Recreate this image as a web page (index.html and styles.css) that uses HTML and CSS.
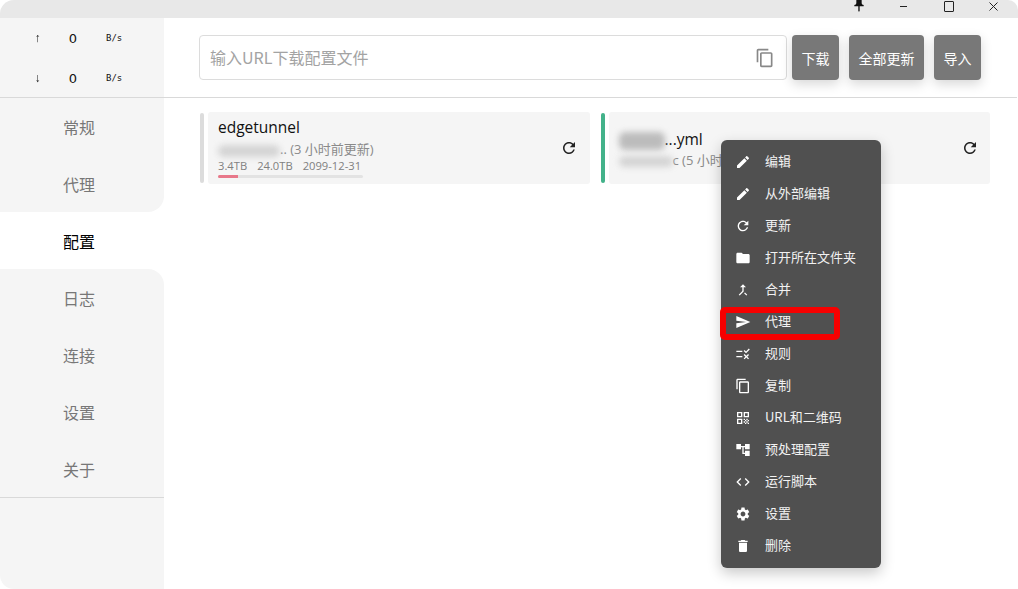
FILE: index.html
```html
<!DOCTYPE html>
<html lang="zh-CN">

<head>
	<meta charset="utf-8">
	<title>配置</title>
	<link rel="stylesheet" href="styles.css">
</head>

<body>
	<svg class="defs" width="0" height="0">
		<symbol id="i-edit" viewBox="0 0 24 24"><path d="M3 17.25V21h3.75L17.81 9.94l-3.75-3.75L3 17.25zM20.71 7.04c.39-.39.39-1.02 0-1.41l-2.34-2.34c-.39-.39-1.02-.39-1.41 0l-1.83 1.83 3.75 3.75 1.83-1.83z"/></symbol>
		<symbol id="i-refresh" viewBox="0 0 24 24"><path d="M17.65 6.35C16.2 4.9 14.21 4 12 4c-4.42 0-7.99 3.58-7.99 8s3.57 8 7.99 8c3.73 0 6.84-2.55 7.73-6h-2.08c-.82 2.33-3.04 4-5.65 4-3.31 0-6-2.69-6-6s2.69-6 6-6c1.66 0 3.14.69 4.22 1.78L13 11h7V4l-2.35 2.35z"/></symbol>
		<symbol id="i-folder" viewBox="0 0 24 24"><path d="M10 4H4c-1.1 0-1.99.9-1.99 2L2 18c0 1.1.9 2 2 2h16c1.1 0 2-.9 2-2V8c0-1.1-.9-2-2-2h-8l-2-2z"/></symbol>
		<symbol id="i-merge" viewBox="0 0 24 24"><path d="M17 20.41 18.41 19 15 15.59 13.59 17 17 20.41zM7.5 8H11v5.59L5.59 19 7 20.41l6-6V8h3.5L12 3.5 7.5 8z"/></symbol>
		<symbol id="i-send" viewBox="0 0 24 24"><path d="M2.01 21 23 12 2.01 3 2 10l15 2-15 2z"/></symbol>
		<symbol id="i-rule" viewBox="0 0 24 24"><path d="M16.54 11 13 7.46l1.41-1.41 2.12 2.12 4.24-4.24 1.41 1.41L16.54 11zM11 7H2v2h9V7zm10 6.41L19.59 12 17 14.59 14.41 12 13 13.41 15.59 16 13 18.59 14.41 20 17 17.41 19.59 20 21 18.59 18.41 16 21 13.41zM11 15H2v2h9v-2z"/></symbol>
		<symbol id="i-copy" viewBox="0 0 24 24"><path d="M16 1H4c-1.1 0-2 .9-2 2v14h2V3h12V1zm3 4H8c-1.1 0-2 .9-2 2v14c0 1.1.9 2 2 2h11c1.1 0 2-.9 2-2V7c0-1.1-.9-2-2-2zm0 16H8V7h11v14z"/></symbol>
		<symbol id="i-qr" viewBox="0 0 24 24"><path d="M3 11h8V3H3v8zm2-6h4v4H5V5zM3 21h8v-8H3v8zm2-6h4v4H5v-4zM13 3v8h8V3h-8zm6 6h-4V5h4v4zM19 19h2v2h-2zM13 13h2v2h-2zM15 15h2v2h-2zM13 17h2v2h-2zM15 19h2v2h-2zM17 17h2v2h-2zM17 13h2v2h-2zM19 15h2v2h-2z"/></symbol>
		<symbol id="i-tree" viewBox="0 0 24 24"><path d="M22 11V3h-7v3H9V3H2v8h7V8h2v10h4v3h7v-8h-7v3h-2V8h2v3z"/></symbol>
		<symbol id="i-code" viewBox="0 0 24 24"><path d="M9.4 16.6 4.8 12l4.6-4.6L8 6l-6 6 6 6 1.4-1.4zm5.2 0 4.6-4.6-4.6-4.6L16 6l6 6-6 6-1.4-1.4z"/></symbol>
		<symbol id="i-gear" viewBox="0 0 24 24"><path d="M19.14 12.94c.04-.3.06-.61.06-.94 0-.32-.02-.64-.07-.94l2.03-1.58c.18-.14.23-.41.12-.61l-1.92-3.32c-.12-.22-.37-.29-.59-.22l-2.39.96c-.5-.38-1.03-.7-1.62-.94l-.36-2.54c-.04-.24-.24-.41-.48-.41h-3.84c-.24 0-.43.17-.47.41l-.36 2.54c-.59.24-1.13.57-1.62.94l-2.39-.96c-.22-.08-.47 0-.59.22L2.74 8.87c-.12.21-.08.47.12.61l2.03 1.58c-.05.3-.09.63-.09.94s.02.64.07.94l-2.03 1.58c-.18.14-.23.41-.12.61l1.92 3.32c.12.22.37.29.59.22l2.39-.96c.5.38 1.03.7 1.62.94l.36 2.54c.05.24.24.41.48.41h3.84c.24 0 .44-.17.47-.41l.36-2.54c.59-.24 1.13-.56 1.62-.94l2.39.96c.22.08.47 0 .59-.22l1.92-3.32c.12-.22.07-.47-.12-.61l-2.01-1.58zM12 15.6c-1.98 0-3.6-1.62-3.6-3.6s1.62-3.6 3.6-3.6 3.6 1.62 3.6 3.6-1.62 3.6-3.6 3.6z"/></symbol>
		<symbol id="i-trash" viewBox="0 0 24 24"><path d="M6 19c0 1.1.9 2 2 2h8c1.1 0 2-.9 2-2V7H6v12zM19 4h-3.5l-1-1h-5l-1 1H5v2h14V4z"/></symbol>
		<symbol id="i-pin" viewBox="0 0 24 24"><path d="M16 9V4h1c.55 0 1-.45 1-1s-.45-1-1-1H7c-.55 0-1 .45-1 1s.45 1 1 1h1v5c0 1.66-1.34 3-3 3v2h5.97v7l1 1 1-1v-7H19v-2c-1.66 0-3-1.34-3-3z"/></symbol>
	</svg>

	<div id="app">
		<div class="titlebar">
			<span class="win-btn pin"><svg><use href="#i-pin"/></svg></span>
			<span class="win-btn"><i class="win-min"></i></span>
			<span class="win-btn"><i class="win-max"></i></span>
			<span class="win-btn"><svg class="win-close" viewBox="0 0 9 9"><path d="M.5.5l8 8M8.5.5l-8 8"/></svg></span>
		</div>

		<div class="body">
			<div class="sidebar">
				<div class="traffic">
					<div class="traffic-row"><span class="arrow">↑</span><span class="rate">0</span><span class="unit">B/s</span></div>
					<div class="traffic-row"><span class="arrow">↓</span><span class="rate">0</span><span class="unit">B/s</span></div>
				</div>
				<div class="nav">
					<div class="nav-item">常规</div>
					<div class="nav-item before-active">代理</div>
					<div class="nav-item active">配置</div>
					<div class="nav-item after-active">日志</div>
					<div class="nav-item">连接</div>
					<div class="nav-item">设置</div>
					<div class="nav-item">关于</div>
				</div>
				<div class="side-bottom"></div>
			</div>

			<div class="main">
				<div class="toolbar">
					<div class="url-box">
						<span class="url-hint">输入URL下载配置文件</span>
						<svg class="url-copy"><use href="#i-copy"/></svg>
					</div>
					<button class="btn btn-first">下载</button>
					<button class="btn">全部更新</button>
					<button class="btn">导入</button>
				</div>

				<div class="profiles">
					<div class="profile">
						<div class="strip"></div>
						<div class="card">
							<div class="card-text">
								<div class="card-name">edgetunnel</div>
								<div class="card-sub"><span class="smudge smudge-a"></span>.. (3 小时前更新)</div>
								<div class="card-stats"><span>3.4TB</span><span>24.0TB</span><span>2099-12-31</span></div>
								<div class="usage"><div class="usage-fill" style="width:14%"></div></div>
							</div>
							<svg class="card-refresh"><use href="#i-refresh"/></svg>
						</div>
					</div>
					<div class="profile">
						<div class="strip strip-on"></div>
						<div class="card">
							<div class="card-text card-text-b">
								<div class="card-name"><span class="smudge smudge-b"></span>...yml</div>
								<div class="card-sub"><span class="smudge smudge-c"></span>c (5 小时</div>
							</div>
							<svg class="card-refresh"><use href="#i-refresh"/></svg>
						</div>
					</div>
				</div>
			</div>
		</div>

		<div class="menu">
			<div class="menu-item"><svg><use href="#i-edit"/></svg>编辑</div>
			<div class="menu-item"><svg><use href="#i-edit"/></svg>从外部编辑</div>
			<div class="menu-item"><svg><use href="#i-refresh"/></svg>更新</div>
			<div class="menu-item"><svg><use href="#i-folder"/></svg>打开所在文件夹</div>
			<div class="menu-item"><svg><use href="#i-merge"/></svg>合并</div>
			<div class="menu-item"><svg><use href="#i-send"/></svg>代理</div>
			<div class="menu-item"><svg><use href="#i-rule"/></svg>规则</div>
			<div class="menu-item"><svg><use href="#i-copy"/></svg>复制</div>
			<div class="menu-item"><svg><use href="#i-qr"/></svg>URL和二维码</div>
			<div class="menu-item"><svg><use href="#i-tree"/></svg>预处理配置</div>
			<div class="menu-item"><svg><use href="#i-code"/></svg>运行脚本</div>
			<div class="menu-item"><svg><use href="#i-gear"/></svg>设置</div>
			<div class="menu-item"><svg><use href="#i-trash"/></svg>删除</div>
			<div class="mark"></div>
		</div>
	</div>
</body>

</html>
```

FILE: styles.css
```css
html,
body {
	margin: 0;
	height: 100%;
	background: #fff;
	overflow: hidden;
}

body {
	font-family: "Open Sans", "Noto Sans CJK SC", sans-serif;
	color: #1a1a1a;
}

.defs {
	display: block;
	position: absolute;
}

#app {
	position: relative;
	height: 589px;
}

/* title bar, cut off at the top */
.titlebar {
	height: 18px;
	background: #e8e8e8;
	border-radius: 14px 10px 0 0;
	display: flex;
	justify-content: flex-end;
	padding-right: 2px;
	overflow: hidden;
}

.win-btn {
	width: 45px;
	height: 18px;
	display: flex;
	justify-content: center;
	flex: none;
	color: #222;
}

.pin svg {
	width: 16px;
	height: 16px;
	margin-top: -3px;
	fill: #111;
}

.win-min {
	width: 7px;
	height: 1px;
	margin-top: 6px;
	background: #222;
}

.win-max {
	width: 8px;
	height: 9px;
	border: 1px solid #222;
	border-radius: 1px;
	margin-top: 1px;
}

.win-close {
	width: 9px;
	height: 9px;
	margin-top: 2px;
	fill: none;
	stroke: #222;
}

.body {
	display: flex;
	height: 571px;
}

/* sidebar */
.sidebar {
	width: 164px;
	flex: none;
	display: flex;
	flex-direction: column;
}

.traffic {
	height: 80px;
	background: #f5f5f5;
	border-bottom: 1px solid #d9d9d9;
	box-sizing: border-box;
}

.traffic-row {
	height: 40px;
	display: flex;
	align-items: center;
	font-family: "DejaVu Sans Mono", monospace;
	color: #111;
}

.arrow {
	width: 75px;
	font-family: "Liberation Sans", sans-serif;
	font-size: 12px;
	text-align: center;
	flex: none;
	will-change: transform;
}

.rate {
	width: 16px;
	font-family: "DejaVu Sans", sans-serif;
	font-size: 13px;
	text-align: center;
	margin-left: -10px;
	flex: none;
}

.unit {
	margin-left: 25px;
	font-size: 9px;
}

.nav {
	background: linear-gradient(#f5f5f5 0 100px, #fff 100px 190px, #f5f5f5 190px);
}

.nav-item {
	height: 57px;
	line-height: 58px;
	text-align: center;
	padding-right: 6px;
	font-family: "Noto Sans CJK SC", sans-serif;
	font-size: 16px;
	color: #777;
	background: #f5f5f5;
}

.before-active {
	border-bottom-right-radius: 16px;
}

.after-active {
	border-top-right-radius: 16px;
}

.active {
	background: #fff;
	color: #000;
}

.side-bottom {
	flex: 1;
	background: #f5f5f5;
	border-top: 1px solid #d9d9d9;
	border-bottom-left-radius: 14px;
}

/* main */
.main {
	flex: 1;
	min-width: 0;
}

.toolbar {
	height: 80px;
	box-sizing: border-box;
	border-bottom: 1px solid #d9d9d9;
	padding: 17px 0 0 35px;
	display: flex;
	align-items: flex-start;
	margin-right: 1px;
}

.url-box {
	width: 588px;
	height: 45px;
	flex: none;
	box-sizing: border-box;
	border: 1px solid #dcdcdc;
	border-radius: 4px;
	display: flex;
	align-items: center;
	justify-content: space-between;
	padding: 0 11px 0 10px;
	font-family: "Noto Sans CJK SC", sans-serif;
	font-size: 16px;
	color: #a3a3a3;
}

.url-hint {
	margin-top: -2px;
}

.url-copy {
	width: 20px;
	height: 20px;
	fill: #888;
}

.btn {
	height: 45px;
	flex: none;
	border: 0;
	border-radius: 4px;
	padding: 0 9.5px;
	margin-left: 10px;
	background: #787878;
	color: #fff;
	font-family: "Noto Sans CJK SC", sans-serif;
	font-size: 14px;
	white-space: nowrap;
	box-shadow: 0 4px 12px rgba(0, 0, 0, 0.16);
}

.btn-first {
	margin-left: 5px;
}

.profiles {
	display: flex;
	gap: 11px;
	padding: 14px 28px 0 36px;
}

.profile {
	display: flex;
	flex: 1;
	min-width: 0;
}

.strip {
	width: 4px;
	height: 70px;
	margin-top: 1px;
	margin-right: 4px;
	border-radius: 2px;
	background: #dcdcdc;
	flex: none;
}

.strip-on {
	background: #43b28a;
}

.card {
	flex: 1;
	height: 72px;
	background: #f5f5f5;
	border-radius: 3px;
	display: flex;
	align-items: center;
	justify-content: space-between;
	padding: 0 12px 0 10px;
}

.strip-on + .card {
	padding-right: 11px;
}

.card-text {
	align-self: flex-start;
	padding-top: 5px;
	min-width: 0;
}

.card-text-b {
	padding-top: 17px;
}

.card-name {
	font-size: 15.5px;
	line-height: 20px;
	color: #111;
	white-space: nowrap;
}

.card-sub {
	font-size: 13px;
	line-height: 24px;
	color: #8a8a8a;
	white-space: nowrap;
}

.card-text-b .card-sub {
	margin-top: -2px;
}

.card-stats {
	display: flex;
	gap: 10px;
	margin-top: -2px;
	font-size: 11.2px;
	line-height: 14px;
	color: #808080;
}

.usage {
	width: 145px;
	height: 3px;
	margin-top: 2px;
	background: #e3e3e3;
	border-radius: 2px;
	overflow: hidden;
}

.usage-fill {
	height: 100%;
	background: #e8788a;
}

/* blurred out parts of the names */
.smudge {
	display: inline-block;
	vertical-align: middle;
	background: #d4d4d4;
	border-radius: 6px;
	filter: blur(3px);
}

.smudge-a {
	width: 62px;
	height: 12px;
}

.smudge-b {
	width: 46px;
	height: 18px;
	background: #bcbcbc;
}

.smudge-c {
	width: 54px;
	height: 11px;
}

.card-refresh {
	width: 18px;
	height: 18px;
	fill: #222;
	flex: none;
}

/* context menu */
.menu {
	position: absolute;
	left: 721px;
	top: 140px;
	width: 160px;
	box-sizing: border-box;
	padding: 6px 0;
	background: #505050;
	border-radius: 6px;
	box-shadow: 0 5px 14px rgba(0, 0, 0, 0.22);
}

.menu-item {
	height: 32px;
	line-height: 30px;
	display: flex;
	align-items: flex-start;
	gap: 14px;
	padding-left: 14px;
	font-family: "Noto Sans CJK SC", sans-serif;
	font-size: 13px;
	color: #f2f2f2;
}

.menu-item svg {
	width: 16px;
	height: 16px;
	margin-top: 8px;
	fill: #fff;
	flex: none;
}

.mark {
	position: absolute;
	left: -1px;
	top: 167px;
	width: 120px;
	height: 33px;
	box-sizing: border-box;
	border: 6px solid #f60000;
	border-radius: 5px;
}
```
